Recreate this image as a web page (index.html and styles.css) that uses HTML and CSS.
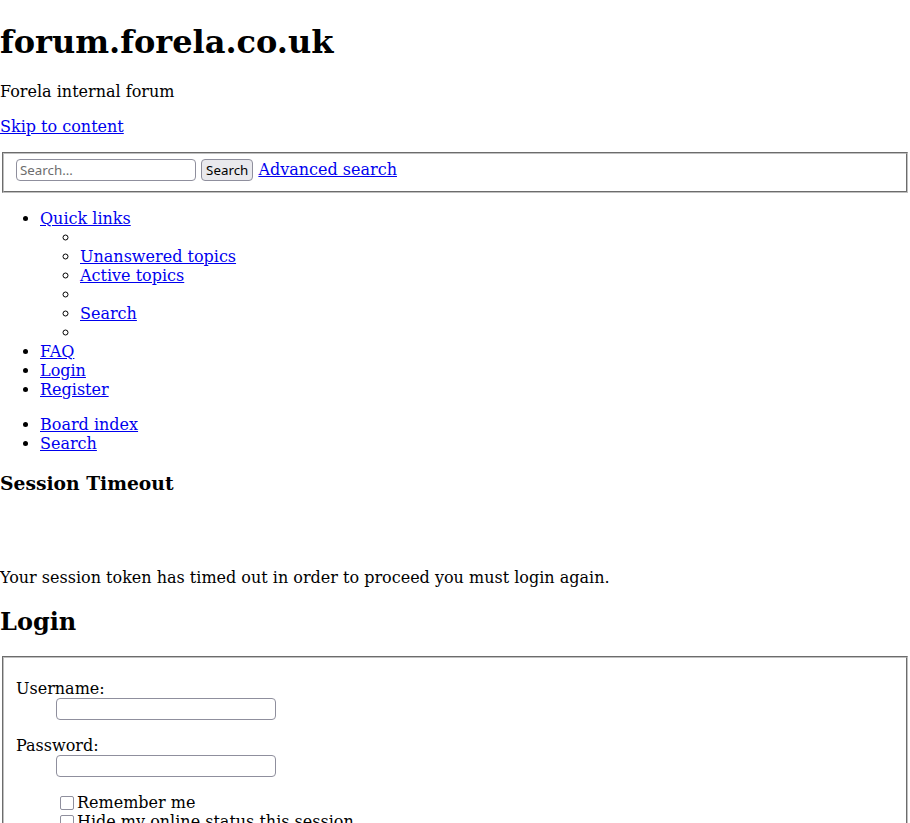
FILE: index.html
```html
<!DOCTYPE html>
<html lang="en">
<head>
<meta charset="utf-8">
<title>forum.forela.co.uk - Login</title>
<link rel="stylesheet" href="styles.css">
</head>
<body class="page">
<div class="wrap">
  <div class="headerbar">
    <h1 class="site-title">forum.forela.co.uk</h1>
    <p class="site-desc">Forela internal forum</p>
    <p class="skiplink"><a href="#start_here">Skip to content</a></p>
    <form class="search-form" action="#">
      <fieldset class="search-box">
        <input class="search-input" type="search" placeholder="Search…">
        <button class="search-btn" type="button">Search</button>
        <a href="#">Advanced search</a>
      </fieldset>
    </form>
  </div>
  <ul class="nav-main">
    <li><a href="#">Quick links</a>
      <ul class="nav-sub">
        <li></li>
        <li><a href="#">Unanswered topics</a></li>
        <li><a href="#">Active topics</a></li>
        <li></li>
        <li><a href="#">Search</a></li>
        <li></li>
      </ul>
    </li>
    <li><a href="#">FAQ</a></li>
    <li><a href="#">Login</a></li>
    <li><a href="#">Register</a></li>
  </ul>
  <ul class="nav-crumbs">
    <li><a href="#">Board index</a></li>
    <li><a href="#">Search</a></li>
  </ul>
  <h3 class="panel-title">Session Timeout</h3>
  <p class="notice">Your session token has timed out in order to proceed you must login again.</p>
  <h2 class="login-title">Login</h2>
  <form class="login-form" action="#">
    <fieldset class="login-box">
      <dl class="field">
        <dt><label for="username">Username:</label></dt>
        <dd><input class="text-input" id="username" type="text"></dd>
      </dl>
      <dl class="field">
        <dt><label for="password">Password:</label></dt>
        <dd><input class="text-input" id="password" type="password"></dd>
      </dl>
      <dl class="field">
        <dd><label class="check-label"><input class="check" type="checkbox">Remember me</label></dd>
        <dd><label class="check-label"><input class="check" type="checkbox">Hide my online status this session</label></dd>
      </dl>
      <dl class="field">
        <dd><input class="submit-btn" type="submit" value="Login"></dd>
      </dl>
    </fieldset>
  </form>
</div>
</body>
</html>
```

FILE: styles.css
```css
html, body {
  background: #ffffff;
}

.page {
  margin: 0;
  font-family: "DejaVu Serif", serif;
  font-size: 16px;
  color: #000000;
}

a {
  color: #0000ee;
}

.site-title {
  font-size: 32px;
  margin: 22.5px 0 21.44px;
}

.site-desc,
.skiplink {
  margin: 16px 0;
}

.search-form {
  margin: 0;
}

.search-box,
.login-box {
  margin: 0 2px;
  border: 2px groove #c0c0c0;
}

.search-box {
  padding: 4.6px 12px 10px;
}

.login-box {
  padding: 5px 12px 10px;
}

.search-input,
.text-input {
  box-sizing: border-box;
  height: 22px;
  padding: 1px 3px;
  border: 1px solid #8f8f9d;
  border-radius: 4px;
  background: #ffffff;
  font-family: "Noto Sans", sans-serif;
  font-size: 13.333px;
}

.search-input {
  width: 180px;
}

.search-input::placeholder {
  color: #6d6d6d;
}

.text-input {
  width: 220px;
}

.search-btn,
.submit-btn {
  box-sizing: border-box;
  height: 22px;
  padding: 0 4px;
  border: 1px solid #8f8f9d;
  border-radius: 4px;
  background: #e9e9ed;
  color: #000000;
  font-family: "Noto Sans", sans-serif;
  font-size: 13.333px;
}

.nav-main,
.nav-crumbs {
  margin: 16px 0;
  padding-left: 40px;
}

.nav-sub {
  margin: 0;
  padding-left: 40px;
  list-style-type: circle;
}

.panel-title {
  font-size: 18.72px;
  margin: 19.5px 0 18.72px;
}

.notice {
  margin: 74px 0 16px;
}

.login-title {
  font-size: 24px;
  margin: 19.92px 0;
}

.login-form {
  margin: 0;
}

.field {
  margin: 16px 0;
}

.field dd {
  margin-left: 40px;
}

.check {
  appearance: none;
  box-sizing: border-box;
  width: 14px;
  height: 14px;
  margin: 0 3px 0 4px;
  border: 1.5px solid #8f8f9d;
  border-radius: 2px;
  background: #ffffff;
  vertical-align: -2px;
}
```
